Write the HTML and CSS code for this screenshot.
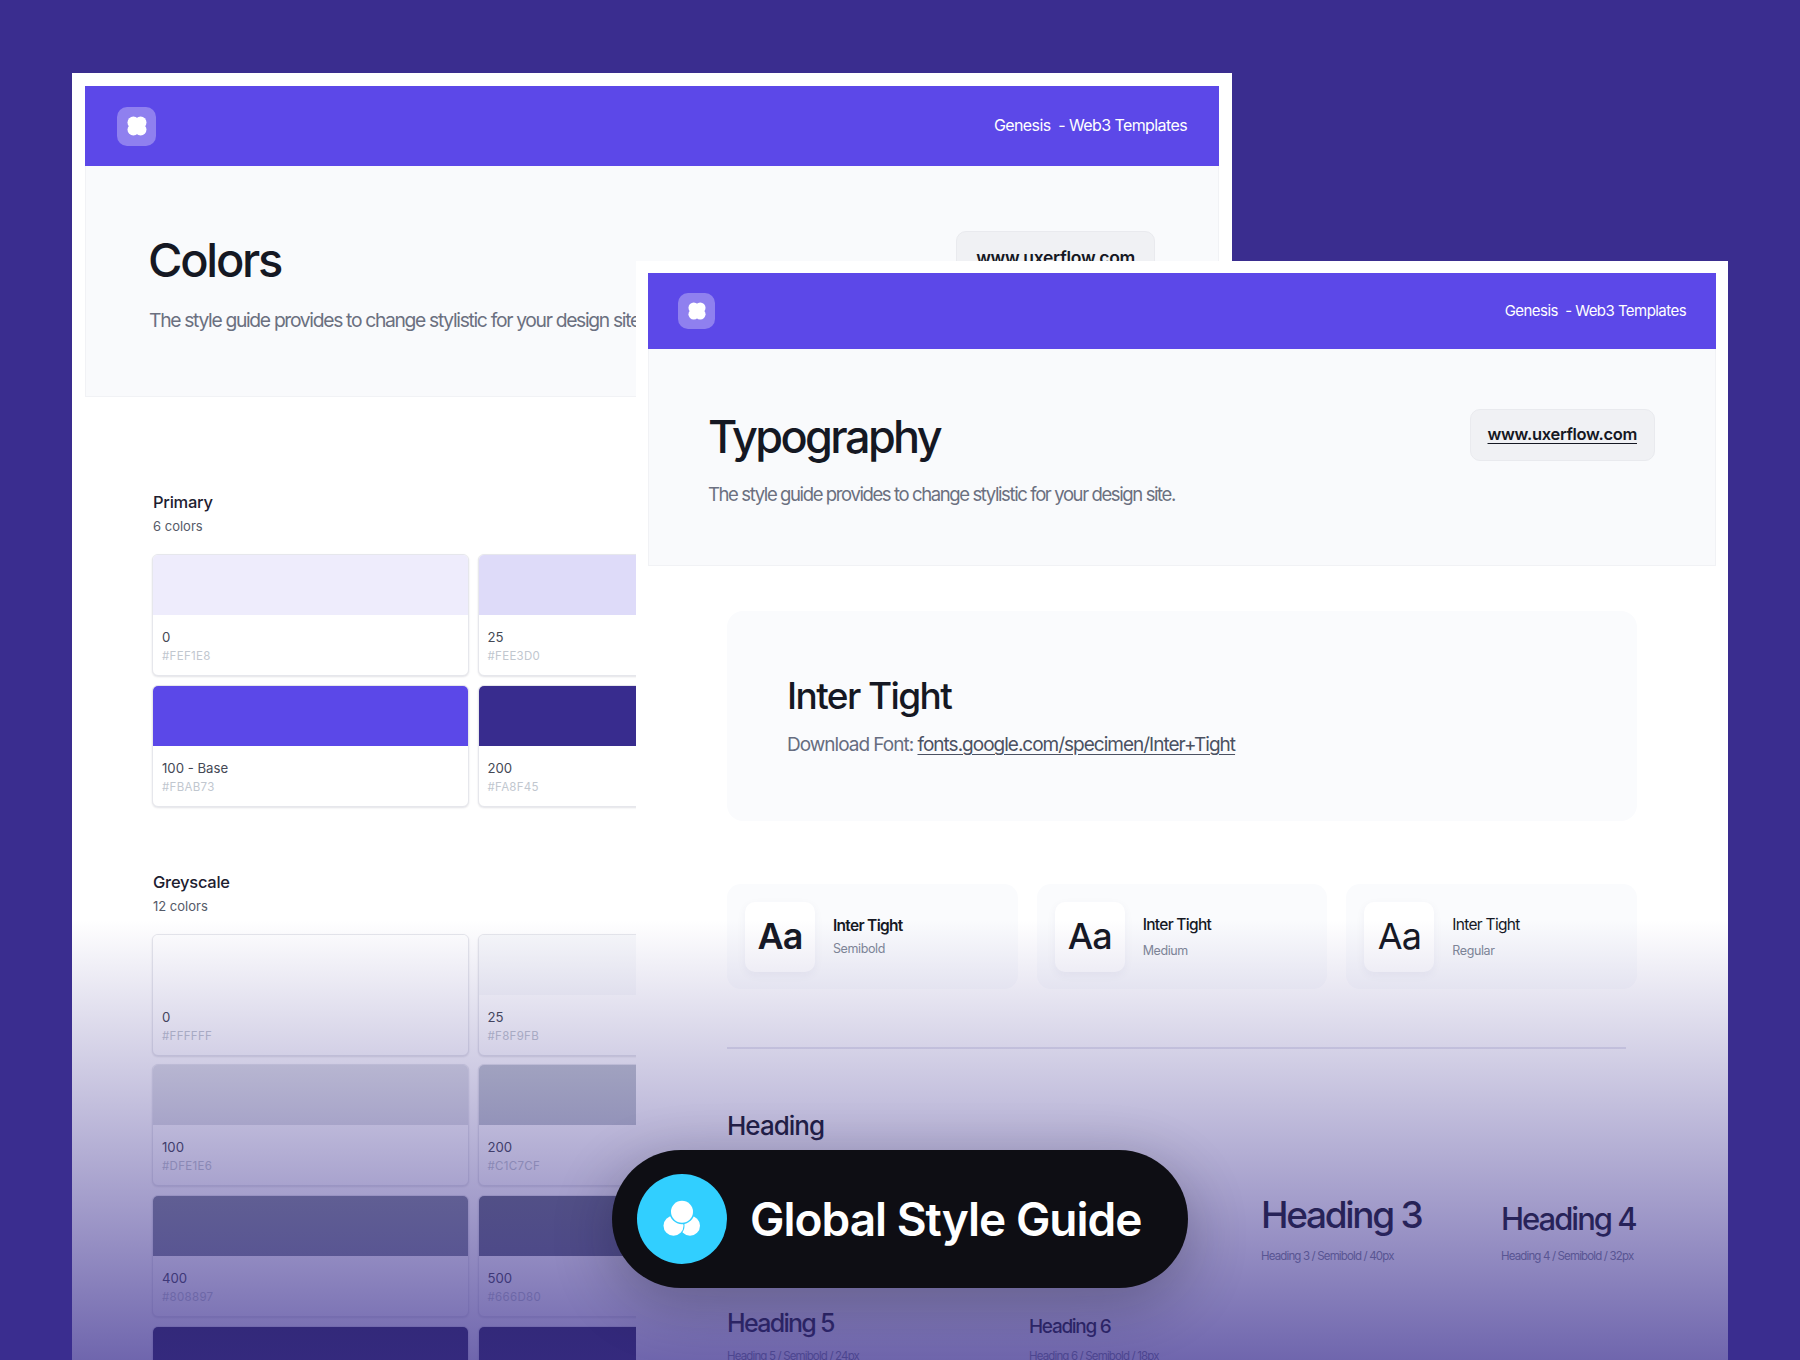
FILE: index.html
```html
<!DOCTYPE html>
<html lang="en">
<head>
  <meta charset="UTF-8" />
  <title>Global Style Guide</title>
  <link rel="stylesheet" href="styles.css">
</head>
<body>

  <div class="stage">

    <div class="sheet sheet-back">
      <div class="bar">
        <div class="logo">
          <svg viewBox="0 0 20 20" width="20" height="20"><g fill="#fff"><circle cx="6.4" cy="6.4" r="5.9"/><circle cx="13.6" cy="6.4" r="5.9"/><circle cx="6.4" cy="13.6" r="5.9"/><circle cx="13.6" cy="13.6" r="5.9"/></g></svg>
        </div>
        <div class="bar-text">Genesis&nbsp; - Web3 Templates</div>
      </div>
      <div class="hero">
        <div>
          <div class="hero-title">Colors</div>
          <div class="hero-sub">The style guide provides to change stylistic for your design site.</div>
        </div>
        <a class="site-btn">www.uxerflow.com</a>
      </div>

      <div class="palette">
        <div class="palette-title">Primary</div>
        <div class="palette-count">6 colors</div>
        <div class="swatches">
          <div class="swatch">
            <div class="chip c-p0"></div>
            <div class="swatch-name">0</div>
            <div class="swatch-hex">#FEF1E8</div>
          </div>
          <div class="swatch">
            <div class="chip c-p25"></div>
            <div class="swatch-name">25</div>
            <div class="swatch-hex">#FEE3D0</div>
          </div>
          <div class="swatch">
            <div class="chip c-p100"></div>
            <div class="swatch-name">100 - Base</div>
            <div class="swatch-hex">#FBAB73</div>
          </div>
          <div class="swatch">
            <div class="chip c-p200"></div>
            <div class="swatch-name">200</div>
            <div class="swatch-hex">#FA8F45</div>
          </div>
        </div>
      </div>

      <div class="palette palette-grey">
        <div class="palette-title">Greyscale</div>
        <div class="palette-count">12 colors</div>
        <div class="swatches">
          <div class="swatch">
            <div class="chip c-g0"></div>
            <div class="swatch-name">0</div>
            <div class="swatch-hex">#FFFFFF</div>
          </div>
          <div class="swatch">
            <div class="chip c-g25"></div>
            <div class="swatch-name">25</div>
            <div class="swatch-hex">#F8F9FB</div>
          </div>
          <div class="swatch">
            <div class="chip c-g100"></div>
            <div class="swatch-name">100</div>
            <div class="swatch-hex">#DFE1E6</div>
          </div>
          <div class="swatch">
            <div class="chip c-g200"></div>
            <div class="swatch-name">200</div>
            <div class="swatch-hex">#C1C7CF</div>
          </div>
          <div class="swatch">
            <div class="chip c-g400"></div>
            <div class="swatch-name">400</div>
            <div class="swatch-hex">#808897</div>
          </div>
          <div class="swatch">
            <div class="chip c-g500"></div>
            <div class="swatch-name">500</div>
            <div class="swatch-hex">#666D80</div>
          </div>
          <div class="swatch">
            <div class="chip c-g700"></div>
          </div>
          <div class="swatch">
            <div class="chip c-g700"></div>
          </div>
        </div>
      </div>
    </div>

    <div class="sheet sheet-front">
      <div class="bar">
        <div class="logo">
          <svg viewBox="0 0 20 20" width="18" height="18"><g fill="#fff"><circle cx="6.4" cy="6.4" r="5.9"/><circle cx="13.6" cy="6.4" r="5.9"/><circle cx="6.4" cy="13.6" r="5.9"/><circle cx="13.6" cy="13.6" r="5.9"/></g></svg>
        </div>
        <div class="bar-text">Genesis&nbsp; - Web3 Templates</div>
      </div>
      <div class="hero">
        <div>
          <div class="hero-title">Typography</div>
          <div class="hero-sub">The style guide provides to change stylistic for your design site.</div>
        </div>
        <a class="site-btn">www.uxerflow.com</a>
      </div>

      <div class="type-body">
        <div class="font-card">
          <div class="font-name">Inter Tight</div>
          <div class="font-link">Download Font: <a>fonts.google.com/specimen/Inter+Tight</a></div>
        </div>

        <div class="weights">
          <div class="weight">
            <div class="weight-box w-600">Aa</div>
            <div>
              <div class="weight-name w-600">Inter Tight</div>
              <div class="weight-label">Semibold</div>
            </div>
          </div>
          <div class="weight">
            <div class="weight-box w-500">Aa</div>
            <div>
              <div class="weight-name w-500">Inter Tight</div>
              <div class="weight-label wide">Medium</div>
            </div>
          </div>
          <div class="weight">
            <div class="weight-box w-400">Aa</div>
            <div>
              <div class="weight-name w-400">Inter Tight</div>
              <div class="weight-label wide">Regular</div>
            </div>
          </div>
        </div>

        <div class="divider"></div>

        <div class="heading-title">Heading</div>
        <div class="samples">
          <div class="sample sample-3">
            <div class="h3">Heading 3</div>
            <div class="sample-label">Heading 3 / Semibold / 40px</div>
          </div>
          <div class="sample">
            <div class="h4">Heading 4</div>
            <div class="sample-label">Heading 4 / Semibold / 32px</div>
          </div>
          <div class="sample">
            <div class="h5">Heading 5</div>
            <div class="sample-label">Heading 5 / Semibold / 24px</div>
          </div>
          <div class="sample">
            <div class="h6">Heading 6</div>
            <div class="sample-label">Heading 6 / Semibold / 18px</div>
          </div>
        </div>
      </div>
    </div>

    <div class="fade"></div>

    <div class="pill">
      <div class="pill-icon">
        <svg viewBox="0 0 40 38" width="40" height="38">
          <circle cx="28" cy="25.7" r="10" fill="#fff"/>
          <circle cx="11.5" cy="25.7" r="11" fill="#31cfff"/>
          <circle cx="11.5" cy="25.7" r="10" fill="#fff"/>
          <circle cx="20" cy="11.7" r="12.5" fill="#31cfff"/>
          <circle cx="20" cy="11.7" r="11" fill="#fff"/>
        </svg>
      </div>
      <div class="pill-text">Global Style Guide</div>
    </div>

  </div>

</body>
</html>
```

FILE: styles.css
```css
* {
  box-sizing: border-box;
  margin: 0;
  padding: 0;
  font-family: 'Inter', sans-serif;
}

body {
  background-color: #3a2d8f;
  overflow: hidden;
}

.stage {
  position: relative;
  width: 1800px;
  height: 1360px;
  overflow: hidden;
  background-color: #3a2d8f;
}

/* the two pages float on the canvas */
.sheet {
  position: absolute;
  background-color: white;
  overflow: hidden;
}

.sheet-back {
  left: 72px;
  top: 73px;
  width: 1160px;
  height: 1287px;
  padding: 13px;
}

.sheet-front {
  left: 636px;
  top: 261px;
  width: 1092px;
  height: 1099px;
  padding: 12px;
}

.bar {
  display: flex;
  justify-content: space-between;
  align-items: center;
  background-color: #5c48e8;
  color: white;
}

.sheet-back .bar {
  height: 80px;
  padding: 0 32px;
}

.sheet-front .bar {
  height: 76px;
  padding: 0 30px;
}

.logo {
  display: flex;
  justify-content: center;
  align-items: center;
  background-color: #8f80ef;
  border-radius: 10px;
}

.sheet-back .logo {
  width: 39px;
  height: 39px;
}

.sheet-front .logo {
  width: 37px;
  height: 36px;
}

.bar-text {
  padding-bottom: 2px;
}

.sheet-back .bar-text {
  font-size: 16px;
  letter-spacing: -0.6px;
}

.sheet-front .bar-text {
  font-size: 15px;
  letter-spacing: -0.55px;
}

.hero {
  display: flex;
  justify-content: space-between;
  align-items: flex-start;
  background-color: #f9fafc;
  border: 1px solid #f1f2f5;
  border-top: none;
}

.sheet-back .hero {
  height: 231px;
  padding: 65px 63px 0 63px;
}

.sheet-front .hero {
  height: 217px;
  padding: 60px 60px 0 59px;
}

.hero-title {
  color: #151823;
  font-weight: 500;
}

.sheet-back .hero-title {
  font-size: 47px;
  line-height: 58px;
  letter-spacing: -2.25px;
  margin-left: -1px;
}

.sheet-front .hero-title {
  font-size: 45px;
  line-height: 56px;
  letter-spacing: -2.6px;
}

.hero-sub {
  color: #6b7080;
  white-space: nowrap;
}

.sheet-back .hero-sub {
  font-size: 19.3px;
  line-height: 27px;
  letter-spacing: -1.32px;
  margin-top: 18px;
}

.sheet-front .hero-sub {
  font-size: 18.5px;
  line-height: 26px;
  letter-spacing: -1.39px;
  margin-top: 16px;
}

.site-btn {
  background-color: #f0f1f4;
  border: 1px solid #e9eaee;
  border-radius: 10px;
  color: #151823;
  font-weight: 600;
  text-decoration: underline;
  text-underline-offset: 3px;
  letter-spacing: -0.3px;
}

.sheet-back .site-btn {
  font-size: 17.5px;
  padding: 15px 19px;
  height: 55px;
}

.sheet-front .site-btn {
  font-size: 16.5px;
  padding: 14px 17px;
  height: 52px;
}

.palette {
  padding: 95px 0 0 67px;
}

.palette-grey {
  padding-top: 65px;
}

.palette-title {
  font-size: 16.5px;
  font-weight: 500;
  line-height: 20px;
  letter-spacing: -0.25px;
  color: #1d2030;
  padding-left: 1px;
}

.palette-count {
  font-size: 13px;
  line-height: 18px;
  color: #555a68;
  margin-top: 5px;
  padding-left: 1px;
}

.swatches {
  display: grid;
  grid-template-columns: 317px 317px;
  gap: 8.7px 8.5px;
  margin-top: 19px;
}

.swatch {
  height: 122px;
  background-color: white;
  border: 1px solid #e6e7ec;
  border-radius: 6px;
  box-shadow: 0 1px 2px rgba(20, 20, 50, 0.12);
  overflow: hidden;
}

.chip {
  height: 60px;
}

.c-p0 { background-color: #eeecfc; }
.c-p25 { background-color: #dedbf9; }
.c-p100 { background-color: #5b48e8; }
.c-p200 { background-color: #382c8e; }
.c-g0 { background-color: #ffffff; }
.c-g25 { background-color: #f8f9fb; }
.c-g100 { background-color: #dfe1e6; }
.c-g200 { background-color: #c1c7cf; }
.c-g400 { background-color: #808897; }
.c-g500 { background-color: #666d80; }
.c-g700 { background-color: #24204e; }

.swatch-name {
  font-size: 13.2px;
  line-height: 18px;
  color: #444855;
  padding: 13px 0 0 9px;
}

.swatch-hex {
  font-size: 11.5px;
  line-height: 16px;
  letter-spacing: 0.3px;
  color: #c1c7cf;
  padding: 2px 0 0 9px;
}

.type-body {
  padding: 45px 90px 0 79px;
}

.font-card {
  width: 910px;
  height: 210px;
  background-color: #fafbfd;
  border-radius: 16px;
  padding: 63px 0 0 60px;
}

.font-name {
  font-size: 37px;
  font-weight: 500;
  letter-spacing: -1.6px;
  line-height: 44px;
  color: #151823;
}

.font-link {
  font-size: 19px;
  letter-spacing: -1px;
  line-height: 26px;
  color: #666d80;
  margin-top: 14px;
}

.font-link a {
  color: #4b5162;
  text-decoration: underline;
  text-underline-offset: 3px;
}

.weights {
  display: grid;
  grid-template-columns: repeat(3, 1fr);
  gap: 19px;
  width: 910px;
  margin-top: 63px;
}

.weight {
  display: flex;
  align-items: center;
  gap: 18px;
  height: 105px;
  padding-left: 18px;
  background-color: #fafbfd;
  border-radius: 14px;
}

.weight-box {
  display: flex;
  justify-content: center;
  align-items: center;
  width: 70px;
  height: 70px;
  padding-bottom: 2px;
  background-color: #fff;
  border-radius: 10px;
  box-shadow: 0 3px 10px rgba(40, 40, 90, 0.05);
  color: #151823;
  font-size: 36px;
  letter-spacing: -1px;
}

.w-600 { font-weight: 600; }
.w-500 { font-weight: 500; }
.w-400 { font-weight: 400; }

.weight-name {
  font-size: 15.5px;
  letter-spacing: -0.7px;
  line-height: 20px;
  color: #151823;
}

.weight-label {
  font-size: 12.5px;
  letter-spacing: -0.4px;
  line-height: 16px;
  color: #808897;
  margin-top: 5px;
}

.weight-label.wide {
  margin-top: 8px;
}

.divider {
  width: 899px;
  height: 2px;
  margin-top: 58px;
  background-color: #e6e6f0;
}

.heading-title {
  font-size: 26px;
  font-weight: 500;
  letter-spacing: -1px;
  line-height: 32px;
  color: #151823;
  margin-top: 61px;
}

.samples {
  display: grid;
  grid-template-columns: 302px 232px 240px 150px;
  align-items: end;
  row-gap: 43px;
  margin-top: 49px;
  color: #151823;
}

.sample-3 {
  grid-column: 3;
}

.sample-label {
  font-size: 11.5px;
  letter-spacing: -0.85px;
  line-height: 16px;
  color: #808897;
  margin-top: 9px;
  white-space: nowrap;
}

.h3, .h4, .h5, .h6 {
  font-weight: 500;
  white-space: nowrap;
}

.h3 { font-size: 37px; letter-spacing: -2.3px; line-height: 48px; }
.h4 { font-size: 31px; letter-spacing: -2px; line-height: 40px; }
.h5 { font-size: 25px; letter-spacing: -1.7px; line-height: 32px; }
.h6 { font-size: 19px; letter-spacing: -1.3px; line-height: 24px; }

/* purple wash over the bottom of both pages */
.fade {
  position: absolute;
  left: 0;
  right: 0;
  top: 920px;
  bottom: 0;
  background: linear-gradient(to bottom, rgba(58, 45, 143, 0), rgba(58, 45, 143, 0.73));
}

.pill {
  position: absolute;
  left: 612px;
  top: 1150px;
  width: 576px;
  height: 138px;
  display: flex;
  align-items: center;
  gap: 23px;
  padding-left: 25px;
  background-color: #0e0e14;
  border-radius: 69px;
  box-shadow: 0 16px 60px rgba(15, 15, 30, 0.3);
}

.pill-icon {
  display: flex;
  justify-content: center;
  align-items: center;
  width: 90px;
  height: 90px;
  background-color: #31cfff;
  border-radius: 50%;
}

.pill-text {
  color: white;
  font-size: 46px;
  font-weight: 600;
  letter-spacing: -1px;
  white-space: nowrap;
}
```
